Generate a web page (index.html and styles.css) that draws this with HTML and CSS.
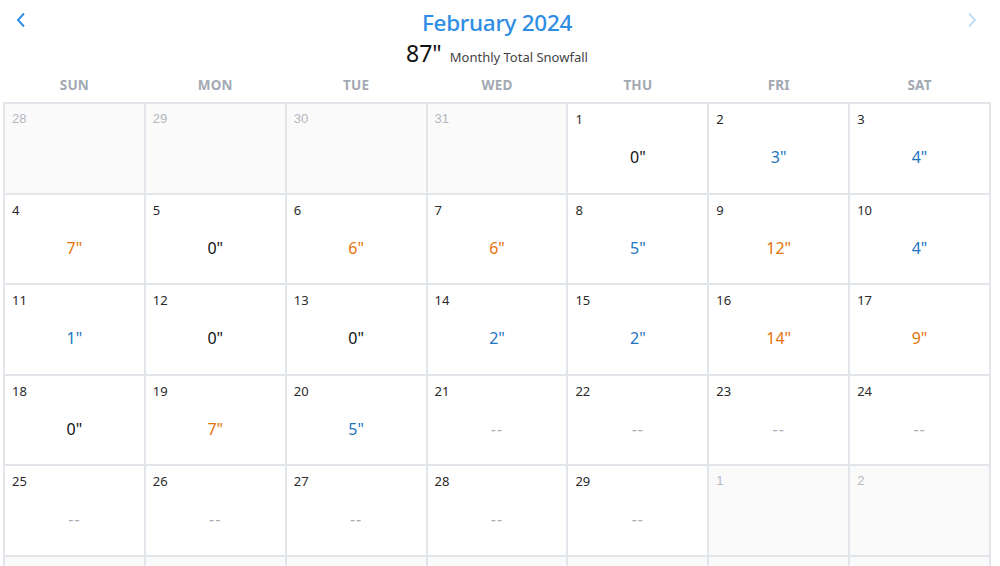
FILE: index.html
```html
<!DOCTYPE html>
<html lang="en">
<head>
<meta charset="utf-8">
<title>February 2024 Snowfall</title>
<link rel="stylesheet" href="styles.css">
</head>
<body>
<div class="cal">
  <header class="cal-head">
    <button class="nav prev" aria-label="Previous month">
      <svg width="10" height="16" viewBox="0 0 10 16"><path d="M8 1.5 L2 8 L8 14.5" fill="none" stroke="currentColor" stroke-width="2"/></svg>
    </button>
    <div class="titles">
      <h1 class="title">February 2024</h1>
      <div class="total"><span class="total-num">87"</span><span class="total-label">Monthly Total Snowfall</span></div>
    </div>
    <button class="nav next" aria-label="Next month">
      <svg width="10" height="16" viewBox="0 0 10 16"><path d="M2 1.5 L8 8 L2 14.5" fill="none" stroke="currentColor" stroke-width="2"/></svg>
    </button>
  </header>
  <div class="weekdays">
    <div>SUN</div><div>MON</div><div>TUE</div><div>WED</div><div>THU</div><div>FRI</div><div>SAT</div>
  </div>
  <div class="grid">
    <div class="cell out"><span class="d">28</span></div>
    <div class="cell out"><span class="d">29</span></div>
    <div class="cell out"><span class="d">30</span></div>
    <div class="cell out"><span class="d">31</span></div>
    <div class="cell"><span class="d">1</span><span class="v zero">0"</span></div>
    <div class="cell"><span class="d">2</span><span class="v blue">3"</span></div>
    <div class="cell"><span class="d">3</span><span class="v blue">4"</span></div>

    <div class="cell"><span class="d">4</span><span class="v orange">7"</span></div>
    <div class="cell"><span class="d">5</span><span class="v zero">0"</span></div>
    <div class="cell"><span class="d">6</span><span class="v orange">6"</span></div>
    <div class="cell"><span class="d">7</span><span class="v orange">6"</span></div>
    <div class="cell"><span class="d">8</span><span class="v blue">5"</span></div>
    <div class="cell"><span class="d">9</span><span class="v orange">12"</span></div>
    <div class="cell"><span class="d">10</span><span class="v blue">4"</span></div>

    <div class="cell"><span class="d">11</span><span class="v blue">1"</span></div>
    <div class="cell"><span class="d">12</span><span class="v zero">0"</span></div>
    <div class="cell"><span class="d">13</span><span class="v zero">0"</span></div>
    <div class="cell"><span class="d">14</span><span class="v blue">2"</span></div>
    <div class="cell"><span class="d">15</span><span class="v blue">2"</span></div>
    <div class="cell"><span class="d">16</span><span class="v orange">14"</span></div>
    <div class="cell"><span class="d">17</span><span class="v orange">9"</span></div>

    <div class="cell"><span class="d">18</span><span class="v zero">0"</span></div>
    <div class="cell"><span class="d">19</span><span class="v orange">7"</span></div>
    <div class="cell"><span class="d">20</span><span class="v blue">5"</span></div>
    <div class="cell"><span class="d">21</span><span class="v none">--</span></div>
    <div class="cell"><span class="d">22</span><span class="v none">--</span></div>
    <div class="cell"><span class="d">23</span><span class="v none">--</span></div>
    <div class="cell"><span class="d">24</span><span class="v none">--</span></div>

    <div class="cell"><span class="d">25</span><span class="v none">--</span></div>
    <div class="cell"><span class="d">26</span><span class="v none">--</span></div>
    <div class="cell"><span class="d">27</span><span class="v none">--</span></div>
    <div class="cell"><span class="d">28</span><span class="v none">--</span></div>
    <div class="cell"><span class="d">29</span><span class="v none">--</span></div>
    <div class="cell out"><span class="d">1</span></div>
    <div class="cell out"><span class="d">2</span></div>

    <div class="cell out"></div>
    <div class="cell out"></div>
    <div class="cell out"></div>
    <div class="cell out"></div>
    <div class="cell out"></div>
    <div class="cell out"></div>
    <div class="cell out"></div>
  </div>
</div>
</body>
</html>
```

FILE: styles.css
```css
* { box-sizing: border-box; }
html, body { margin: 0; padding: 0; background: #fff; }
body {
  font-family: "Noto Sans", "Open Sans", sans-serif;
  color: #222;
  overflow: hidden;
  height: 566px;
}
.cal { padding: 0 9px 0 3px; }
.cal-head {
  display: grid;
  grid-template-columns: 1fr auto 1fr;
  align-items: start;
  height: 70px;
}
.nav {
  border: 0;
  background: none;
  padding: 0;
  margin: 12px 0 0 0;
  width: 10px;
  height: 16px;
  display: block;
  cursor: pointer;
}
.nav svg { display: block; }
.prev { color: #2f8ee3; margin-left: 13px; justify-self: start; }
.next { color: #c4def5; margin-right: 14px; justify-self: end; }
.titles {
  display: flex;
  flex-direction: column;
  align-items: center;
  padding-top: 6px;
}
.title {
  margin: 0;
  font-size: 22.5px;
  font-weight: 500;
  color: #2f8ee3;
  line-height: 34px;
  letter-spacing: -0.3px;
}
.total {
  display: flex;
  align-items: baseline;
  gap: 8px;
  line-height: 26px;
}
.total-num { font-size: 23px; color: #111; }
.total-label { font-size: 13px; color: #444; }
.weekdays {
  display: grid;
  grid-template-columns: repeat(7, 1fr);
  padding: 0 2px;
  gap: 2px;
  height: 32px;
  align-items: center;
}
.weekdays div {
  text-align: center;
  font-size: 13.5px;
  font-weight: 700;
  color: #a2a9b3;
  letter-spacing: 0.2px;
  padding-bottom: 2px;
}
.grid {
  display: grid;
  grid-template-columns: repeat(7, 1fr);
  grid-auto-rows: 88.5px;
  gap: 2px;
  padding: 2px;
  background: #e2e5ea;
}
.cell {
  background: #fff;
  display: flex;
  flex-direction: column;
  padding: 6px 7px;
}
.cell.out { background: #fafafa; }
.d {
  font-size: 13px;
  line-height: 18px;
  color: #2a2a2a;
}
.out .d { color: #b4b8be; font-family: "Liberation Sans", sans-serif; }
.v {
  text-align: center;
  font-size: 16px;
  line-height: 22px;
  margin-top: 18px;
}
.zero { color: #111; }
.blue { color: #1e74bf; }
.orange { color: #e5730c; }
.none { color: #a9adb3; letter-spacing: 1px; }
```
